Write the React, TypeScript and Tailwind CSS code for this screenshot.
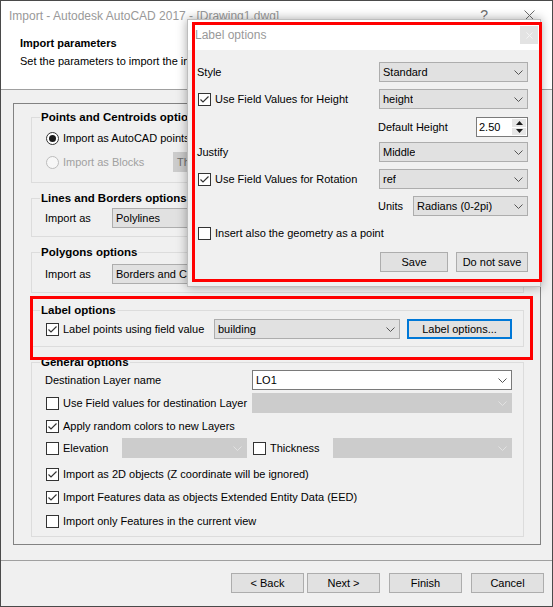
import React from "react";
import clsx from "clsx";

const Chevron = ({ color = "#555555" }: { color?: string }) => (
  <svg width="9" height="5" viewBox="0 0 9 5" className="shrink-0">
    <polyline points="0.5,0.5 4.5,4.5 8.5,0.5" fill="none" stroke={color} strokeWidth="1" />
  </svg>
);

const Check = ({ checked }: { checked?: boolean }) => (
  <span className="w-[13px] h-[13px] border border-[#333333] bg-white flex items-center justify-center shrink-0">
    {checked && (
      <svg width="11" height="11" viewBox="0 0 11 11">
        <polyline points="1.5,5.5 4,8 9.5,2.5" fill="none" stroke="#333333" strokeWidth="1.2" />
      </svg>
    )}
  </span>
);

const CheckRow = ({ checked, label, className }: { checked?: boolean; label: string; className?: string }) => (
  <div className={clsx("h-[20px] flex items-center", className)}>
    <span className="ml-[1px]">
      <Check checked={checked} />
    </span>
    <span className="ml-[4px] whitespace-nowrap">{label}</span>
  </div>
);

const Combo = ({
  value,
  className,
  disabled,
  white,
}: {
  value?: string;
  className?: string;
  disabled?: boolean;
  white?: boolean;
}) => (
  <div
    className={clsx(
      "h-[20px] flex items-center justify-between pl-[3px] pr-[4px] border",
      disabled
        ? "bg-[#cccccc] border-[#cccccc]"
        : white
        ? "bg-white border-[#7a7a7a]"
        : "bg-[#e1e1e1] border-[#adadad]",
      className
    )}
  >
    <span className="whitespace-nowrap overflow-hidden">{value}</span>
    <Chevron color={disabled ? "#e2e2e2" : "#555555"} />
  </div>
);

const Button = ({ label, className }: { label: string; className?: string }) => (
  <div
    className={clsx(
      "h-[20px] bg-[#e1e1e1] border border-[#adadad] flex items-center justify-center whitespace-nowrap",
      className
    )}
  >
    {label}
  </div>
);

const GroupBox = ({
  title,
  className,
  children,
}: {
  title: string;
  className?: string;
  children: React.ReactNode;
}) => (
  <fieldset className={clsx("border border-[#dcdcdc] pl-[8px] pr-[11px] min-w-0", className)}>
    <legend className="px-[1px] font-bold leading-[14px] text-[11.5px]">{title}</legend>
    <div className="pl-[5px] flex flex-col">{children}</div>
  </fieldset>
);

export default function App() {
  return (
    <div className="w-[553px] h-[607px] relative border border-[#4a4a4a] bg-[#f0f0f0] font-['Liberation_Sans',Arial,sans-serif] text-[11px] text-black flex flex-col overflow-hidden">
      {/* Title + header */}
      <div className="bg-white h-[89px] border-b border-[#a0a0a0] shrink-0 flex flex-col">
        <div className="h-[29px] flex items-center pl-[8px] pr-[17px] text-[12px] text-[#999999]">
          <span className="flex-1 whitespace-nowrap">Import - Autodesk AutoCAD 2017 - [Drawing1.dwg]</span>
          <span className="text-[14px] text-[#6f6f6f] mr-[36px]">?</span>
          <svg width="11" height="11" viewBox="0 0 11 11">
            <path d="M0.5 0.5 L10.5 10.5 M10.5 0.5 L0.5 10.5" stroke="#6f6f6f" strokeWidth="1" />
          </svg>
        </div>
        <div className="pl-[19px] pt-[5px]">
          <div className="font-bold leading-[16px]">Import parameters</div>
          <div className="leading-[16px] mt-[2px] whitespace-nowrap">
            Set the parameters to import the information into the current drawing
          </div>
        </div>
      </div>

      {/* Main panel */}
      <div className="h-[470px] shrink-0 pt-[13px] pl-[12px] pr-[11px]">
        <div className="h-[442px] border border-[#828282] pt-[6px] pl-[17px] pr-[16px] flex flex-col">
          <GroupBox title="Points and Centroids options" className="pt-[4px] pb-[10px]">
            <div className="h-[20px] flex items-center">
              <span className="ml-[1px] w-[13px] h-[13px] rounded-full border border-[#333333] bg-white flex items-center justify-center">
                <span className="w-[7px] h-[7px] rounded-full bg-[#1a1a1a]" />
              </span>
              <span className="ml-[4px] whitespace-nowrap">Import as AutoCAD points</span>
            </div>
            <div className="h-[20px] mt-[4px] flex items-center">
              <div className="w-[128px] flex items-center">
                <span className="ml-[1px] w-[13px] h-[13px] rounded-full border border-[#bcbcbc] bg-[#f7f7f7]" />
                <span className="ml-[4px] whitespace-nowrap text-[#a0a0a0]">Import as Blocks</span>
              </div>
              <div className="h-[20px] w-[240px] bg-[#cccccc] flex items-center pl-[4px] text-[#6d6d6d]">Th</div>
            </div>
          </GroupBox>

          <GroupBox title="Lines and Borders options" className="mt-[8px] pt-[3px] pb-[8px]">
            <div className="h-[20px] flex items-center">
              <span className="w-[67px] whitespace-nowrap">Import as</span>
              <Combo value="Polylines" className="flex-1" />
            </div>
          </GroupBox>

          <GroupBox title="Polygons options" className="mt-[8px] pt-[5px] pb-[8px]">
            <div className="h-[20px] flex items-center">
              <span className="w-[67px] whitespace-nowrap">Import as</span>
              <Combo value="Borders and Centroids" className="flex-1" />
            </div>
          </GroupBox>

          <GroupBox title="Label options" className="mt-[10px] pt-[2px] pb-[7px]">
            <div className="h-[20px] flex items-center">
              <div className="w-[169px]">
                <CheckRow checked label="Label points using field value" />
              </div>
              <Combo value="building" className="flex-1" />
              <div className="ml-[7px] w-[105px] h-[20px] bg-[#e1e1e1] border-2 border-[#0078d7] flex items-center justify-center whitespace-nowrap">
                Label options...
              </div>
            </div>
          </GroupBox>

          <GroupBox title="General options" className="mt-[8px] pt-[1px] pb-[5px]">
            <div className="h-[20px] flex items-center">
              <span className="w-[207px] whitespace-nowrap">Destination Layer name</span>
              <Combo value="LO1" white className="flex-1" />
            </div>
            <div className="h-[20px] mt-[3px] flex items-center">
              <div className="w-[207px]">
                <CheckRow label="Use Field values for destination Layer" />
              </div>
              <Combo disabled className="flex-1" />
            </div>
            <CheckRow checked label="Apply random colors to new Layers" className="mt-[3px]" />
            <div className="h-[20px] mt-[2px] flex items-center">
              <div className="w-[77px]">
                <CheckRow label="Elevation" />
              </div>
              <Combo disabled className="w-[125px]" />
              <div className="w-[86px] pl-[5px]">
                <CheckRow label="Thickness" />
              </div>
              <Combo disabled className="flex-1" />
            </div>
            <CheckRow checked label="Import as 2D objects (Z coordinate will be ignored)" className="mt-[6px]" />
            <CheckRow
              checked
              label="Import Features data as objects Extended Entity Data (EED)"
              className="mt-[3px]"
            />
            <CheckRow label="Import only Features in the current view" className="mt-[4px]" />
          </GroupBox>
        </div>
      </div>

      {/* Footer buttons */}
      <div className="flex-1 border-t border-[#a0a0a0] pt-[12px] pr-[8px] flex justify-end items-start">
        <Button label="< Back" className="w-[73px]" />
        <Button label="Next >" className="w-[73px] ml-[3px]" />
        <Button label="Finish" className="w-[73px] ml-[9px]" />
        <Button label="Cancel" className="w-[73px] ml-[9px]" />
      </div>

      {/* Label options dialog */}
      <div className="absolute left-[186px] top-[18px] w-[354px] h-[268px] bg-[#f0f0f0] border border-[#bdbdbd] shadow-[0_0_10px_rgba(0,0,0,0.35)] flex flex-col">
        <div className="h-[30px] bg-white flex items-center pl-[7px] pr-[2px] text-[12px] text-[#999999]">
          <span className="flex-1">Label options</span>
          <span className="w-[18px] h-[18px] bg-[#e3e3e3] flex items-center justify-center">
            <svg width="7" height="7" viewBox="0 0 7 7">
              <path d="M0.5 0.5 L6.5 6.5 M6.5 0.5 L0.5 6.5" stroke="#f4f4f4" strokeWidth="1" />
            </svg>
          </span>
        </div>
        <div className="pl-[9px] pr-[12px] pt-[12px] flex flex-col">
          <div className="h-[20px] flex items-center justify-between">
            <span>Style</span>
            <Combo value="Standard" className="w-[149px]" />
          </div>
          <div className="h-[20px] mt-[7px] flex items-center justify-between">
            <CheckRow checked label="Use Field Values for Height" />
            <Combo value="height" className="w-[149px]" />
          </div>
          <div className="h-[20px] mt-[8px] flex items-center justify-end">
            <div className="w-[150px] flex items-center justify-between">
              <span className="whitespace-nowrap">Default Height</span>
              <div className="w-[52px] h-[20px] bg-white border border-[#7a7a7a] flex items-center">
                <span className="flex-1 pl-[2px]">2.50</span>
                <div className="w-[14px] h-[16px] mr-[1px] flex flex-col gap-[1px]">
                  <div className="flex-1 bg-[#e6e6e6] flex items-center justify-center">
                    <svg width="7" height="4" viewBox="0 0 7 4">
                      <polygon points="3.5,0 7,4 0,4" fill="#1a1a1a" />
                    </svg>
                  </div>
                  <div className="flex-1 bg-[#e6e6e6] flex items-center justify-center">
                    <svg width="7" height="4" viewBox="0 0 7 4">
                      <polygon points="0,0 7,0 3.5,4" fill="#1a1a1a" />
                    </svg>
                  </div>
                </div>
              </div>
            </div>
          </div>
          <div className="h-[20px] mt-[5px] flex items-center justify-between">
            <span>Justify</span>
            <Combo value="Middle" className="w-[149px]" />
          </div>
          <div className="h-[20px] mt-[7px] flex items-center justify-between">
            <CheckRow checked label="Use Field Values for Rotation" />
            <Combo value="ref" className="w-[149px]" />
          </div>
          <div className="h-[20px] mt-[7px] flex items-center justify-end">
            <div className="w-[150px] flex items-center justify-between">
              <span>Units</span>
              <Combo value="Radians (0-2pi)" className="w-[115px]" />
            </div>
          </div>
          <CheckRow label="Insert also the geometry as a point" className="mt-[7px]" />
          <div className="h-[20px] mt-[9px] flex items-center justify-end">
            <Button label="Save" className="w-[68px]" />
            <Button label="Do not save" className="w-[72px] ml-[8px]" />
          </div>
        </div>
      </div>

      {/* Red highlight frames */}
      <div className="absolute left-[191px] top-[21px] w-[350px] h-[260px] border-[3px] border-[#ff0000] pointer-events-none" />
      <div className="absolute left-[29px] top-[295px] w-[503px] h-[64px] border-[3px] border-[#ff0000] pointer-events-none" />
    </div>
  );
}
